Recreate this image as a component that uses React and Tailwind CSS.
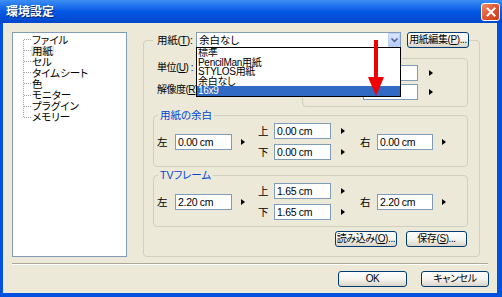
import React from 'react'

const treeItems = ['ファイル', '用紙', 'セル', 'タイムシート', '色', 'モニター', 'プラグイン', 'メモリー']
const paperItems = ['標準', 'PencilMan用紙', 'STYLOS用紙', '余白なし', '16x9']

const Arrow = () => (
    <span className="inline-block w-0 h-0 border-y-[3px] border-y-transparent border-l-[4px] border-l-black" />
)

const Field = ({ value, className }) => (
    <div className={`h-[16px] border border-[#7F9DB9] bg-white pl-[2px] text-[10.5px] leading-[14px] tracking-[-0.3px] whitespace-nowrap ${className}`}>
        {value}
    </div>
)

const XpButton = ({ className, children }) => (
    <button className={`h-[16px] rounded-[3px] border border-[#003C74] bg-gradient-to-b from-white via-[#F5F4EF] to-[#DAD5C8] text-[10px] leading-[14px] tracking-[-0.4px] whitespace-nowrap text-black ${className}`}>
        {children}
    </button>
)

// one bordered group: left value, top/bottom pair, right value
const MarginGroup = ({ title, left, top, bottom, right }) => (
    <fieldset className="min-w-0 rounded-[4px] border border-[#D0D0BF] pb-[6px]">
        <legend className="ml-[4px] px-[2px] text-[10.5px] leading-[12px] whitespace-nowrap text-[#0046D5]">{title}</legend>
        <div className="flex items-center pt-[2px] pl-[3px] text-[10.5px] leading-[12px]">
            <span className="w-[10px]">左</span>
            <Field value={left} className="ml-[8px] w-[57px]" />
            <span className="ml-[9px] flex"><Arrow /></span>
            <div className="ml-[13px] flex flex-col gap-[5px]">
                <div className="flex items-center">
                    <span className="w-[10px]">上</span>
                    <Field value={top} className="ml-[6px] w-[57px]" />
                    <span className="ml-[10px] flex"><Arrow /></span>
                </div>
                <div className="flex items-center">
                    <span className="w-[10px]">下</span>
                    <Field value={bottom} className="ml-[6px] w-[57px]" />
                    <span className="ml-[10px] flex"><Arrow /></span>
                </div>
            </div>
            <span className="ml-[15px] w-[10px]">右</span>
            <Field value={right} className="ml-[7px] w-[56px]" />
            <span className="ml-[9px] flex"><Arrow /></span>
        </div>
    </fieldset>
)

export default function App() {
    return (
        <div className="relative w-[502px] h-[297px] overflow-hidden flex flex-col font-['Liberation_Sans','Noto_Sans_CJK_JP',sans-serif] [font-feature-settings:'palt'] text-black">
            {/* title bar */}
            <div className="h-[23px] flex items-center bg-gradient-to-b from-[#3D8DF5] via-[#0458E4] to-[#0047CC] pl-[6px] pr-[2px]">
                <span className="text-white font-bold text-[12px] leading-none [text-shadow:1px_1px_#0A246A]">環境設定</span>
                <div className="ml-auto w-[19px] h-[18px] rounded-[3px] border border-white bg-gradient-to-br from-[#F08B6A] via-[#E2542D] to-[#C93F1C] flex items-center justify-center">
                    <svg width="10" height="10" viewBox="0 0 10 10">
                        <path d="M1.5 1.5 L8.5 8.5 M8.5 1.5 L1.5 8.5" stroke="white" strokeWidth="2" strokeLinecap="square" />
                    </svg>
                </div>
            </div>

            {/* body */}
            <div className="flex-1 flex flex-col bg-[#ECE9D8] border-l-[3px] border-r-[5px] border-b-[4px] border-[#0250E0] px-[9px] pt-[9px]">
                <div className="flex gap-[16px]">
                    {/* tree */}
                    <div className="relative w-[115px] h-[225px] border border-[#7F9DB9] bg-white">
                        <svg className="absolute left-0 top-0" width="113" height="223">
                            <line x1="10.5" y1="7" x2="10.5" y2="84" stroke="#A0A0A0" strokeDasharray="1 1" />
                            {treeItems.map((t, i) => (
                                <line key={t} x1="11" y1={Math.floor(6.55 + 11.1 * i) + 0.5} x2="18" y2={Math.floor(6.55 + 11.1 * i) + 0.5} stroke="#A0A0A0" strokeDasharray="1 1" />
                            ))}
                        </svg>
                        <ul className="pt-[1px] pl-[19px]">
                            {treeItems.map(t => (
                                <li key={t} className="h-[11.1px] flex items-center text-[10.5px] leading-[10px] whitespace-nowrap">
                                    <span className={t === '用紙' ? 'bg-[#ECE9D8] -ml-[1px] px-[1px]' : ''}>{t}</span>
                                </li>
                            ))}
                        </ul>
                    </div>

                    {/* settings group */}
                    <fieldset className="w-[337px] min-w-0 rounded-[4px] border border-[#D0D0BF] pl-[9px] pr-[11px] pb-[4px]">
                        <legend className="flex items-center h-[16px] text-[10.5px] whitespace-nowrap">
                            <span className="w-[43px] pl-[4px] leading-[12px] tracking-[-0.3px]">用紙(<u>T</u>):</span>
                            <div className="relative w-[205px] h-[16px] border border-[#7F9DB9] bg-white flex">
                                <span className="flex-1 pl-[2px] leading-[14px]">余白なし</span>
                                <div className="w-[12px] h-[14px] rounded-[1px] border border-[#B9CFF5] bg-gradient-to-b from-[#D9E6FD] to-[#B2CAF8] flex items-center justify-center">
                                    <svg width="7" height="5" viewBox="0 0 7 5">
                                        <path d="M0.5 0.5 L3.5 3.5 L6.5 0.5" fill="none" stroke="#4D6185" strokeWidth="1.5" />
                                    </svg>
                                </div>
                                {/* open dropdown list */}
                                <ul className="absolute z-10 left-[-1px] top-[14px] w-[205px] h-[50px] border border-black bg-white">
                                    {paperItems.map(p => (
                                        <li key={p} className={`h-[9.6px] pl-[1px] text-[10px] leading-[9.6px] tracking-[-0.3px] ${p === '16x9' ? 'bg-[#316AC5] text-white' : ''}`}>{p}</li>
                                    ))}
                                </ul>
                            </div>
                            <XpButton className="ml-[6px] w-[62px]">用紙編集(<u>P</u>)...</XpButton>
                        </legend>

                        {/* unit / resolution */}
                        <div className="mt-[10px] flex h-[49px]">
                            <div className="flex flex-col gap-[10px] pt-[4px] pl-[4px] text-[10px] leading-[12px] tracking-[-0.5px] whitespace-nowrap">
                                <span>単位(<u>U</u>) :</span>
                                <span>解像度(<u>R</u>) :</span>
                            </div>
                            <div className="ml-auto w-[166px] h-[49px] rounded-[4px] border border-[#D0D0BF] pt-[6px] pl-[60px] flex flex-col gap-[3px]">
                                <div className="flex items-center">
                                    <Field value="" className="w-[55px]" />
                                    <span className="ml-[11px] flex"><Arrow /></span>
                                </div>
                                <div className="flex items-center">
                                    <Field value="" className="w-[55px]" />
                                    <span className="ml-[11px] flex"><Arrow /></span>
                                </div>
                            </div>
                        </div>

                        <div className="mt-[2px]">
                            <MarginGroup title="用紙の余白" left="0.00 cm" top="0.00 cm" bottom="0.00 cm" right="0.00 cm" />
                        </div>
                        <div className="mt-[2px]">
                            <MarginGroup title="TVフレーム" left="2.20 cm" top="1.65 cm" bottom="1.65 cm" right="2.20 cm" />
                        </div>

                        <div className="mt-[4px] flex justify-end gap-[9px] pr-[1px]">
                            <XpButton className="w-[62px]">読み込み(<u>O</u>)...</XpButton>
                            <XpButton className="w-[61px]">保存(<u>S</u>)...</XpButton>
                        </div>
                    </fieldset>
                </div>

                <div className="mt-[6px] h-[2px] border-t border-[#ACA899] border-b border-b-white" />

                <div className="mt-[6px] -mr-[1px] flex justify-end gap-[14px]">
                    <XpButton className="w-[69px]">OK</XpButton>
                    <XpButton className="w-[68px]">キャンセル</XpButton>
                </div>
            </div>

            {/* red annotation arrow */}
            <svg className="absolute z-20 left-[368px] top-[40px]" width="16" height="57" viewBox="0 0 16 57">
                <rect x="6" y="0" width="4" height="38" fill="#F00000" />
                <path d="M0 37 L16 37 L8 56 Z" fill="#F00000" />
            </svg>
        </div>
    )
}
